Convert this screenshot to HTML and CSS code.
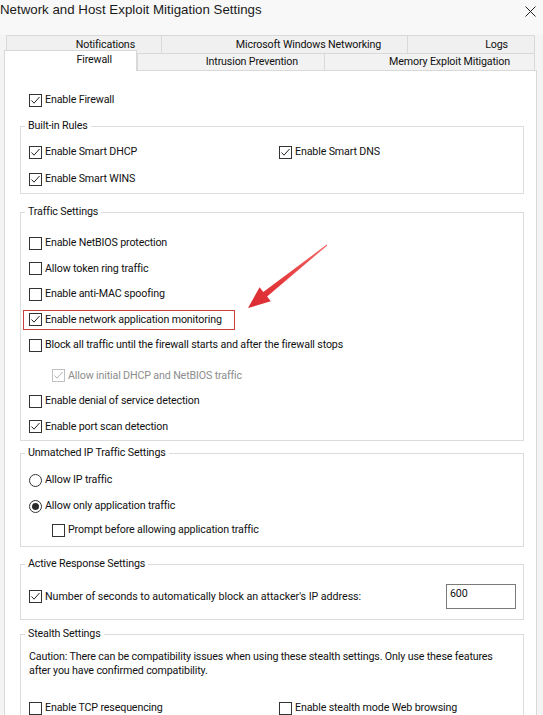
FILE: index.html
```html
<!DOCTYPE html>
<html>
<head>
<meta charset="utf-8">
<link rel="stylesheet" href="styles.css">
</head>
<body>
<div class="window">
  <div class="titlebar">
    <span class="title">Network and Host Exploit Mitigation Settings</span>
    <svg class="close" width="11" height="11" viewBox="0 0 11 11"><path d="M0.5 0.5L10.5 10.5M10.5 0.5L0.5 10.5" stroke="#222" stroke-width="1" fill="none"/></svg>
  </div>
  <div class="tabs">
    <div class="tabrow tabrow-top">
      <div class="tab w-notif">Notifications</div>
      <div class="tab w-mwn">Microsoft Windows Networking</div>
      <div class="tab w-logs">Logs</div>
    </div>
    <div class="tabrow tabrow-bottom">
      <div class="tab tab-active w-fw">Firewall</div>
      <div class="tab w-ips">Intrusion Prevention</div>
      <div class="tab w-mem">Memory Exploit Mitigation</div>
    </div>
  </div>
  <div class="panel">
    <div class="row"><span class="cb checked"></span><span class="lbl">Enable Firewall</span></div>

    <fieldset class="group g-builtin">
      <legend>Built-in Rules</legend>
      <div class="two-col">
        <div class="row"><span class="cb checked"></span><span class="lbl">Enable Smart DHCP</span></div>
        <div class="row"><span class="cb checked"></span><span class="lbl">Enable Smart DNS</span></div>
      </div>
      <div class="row mt9"><span class="cb checked"></span><span class="lbl">Enable Smart WINS</span></div>
    </fieldset>

    <fieldset class="group g-traffic">
      <legend>Traffic Settings</legend>
      <div class="stack">
        <div class="row"><span class="cb"></span><span class="lbl">Enable NetBIOS protection</span></div>
        <div class="row"><span class="cb"></span><span class="lbl">Allow token ring traffic</span></div>
        <div class="row"><span class="cb"></span><span class="lbl">Enable anti-MAC spoofing</span></div>
        <div class="row"><span class="highlight"><span class="cb checked"></span><span class="lbl">Enable network application monitoring</span></span></div>
        <div class="row"><span class="cb"></span><span class="lbl">Block all traffic until the firewall starts and after the firewall stops</span></div>
        <div class="row indent mt5 disabled"><span class="cb checked"></span><span class="lbl">Allow initial DHCP and NetBIOS traffic</span></div>
        <div class="row"><span class="cb"></span><span class="lbl">Enable denial of service detection</span></div>
        <div class="row"><span class="cb checked"></span><span class="lbl">Enable port scan detection</span></div>
      </div>
    </fieldset>

    <fieldset class="group g-unmatched">
      <legend>Unmatched IP Traffic Settings</legend>
      <div class="row"><span class="rb"></span><span class="lbl">Allow IP traffic</span></div>
      <div class="row mt8"><span class="rb selected"></span><span class="lbl">Allow only application traffic</span></div>
      <div class="row indent mt6"><span class="cb"></span><span class="lbl">Prompt before allowing application traffic</span></div>
    </fieldset>

    <fieldset class="group g-active">
      <legend>Active Response Settings</legend>
      <div class="row row-input">
        <span class="row"><span class="cb checked"></span><span class="lbl lbl-wide">Number of seconds to automatically block an attacker's IP address:</span></span>
        <span class="textbox">600</span>
      </div>
    </fieldset>

    <fieldset class="group g-stealth">
      <legend>Stealth Settings</legend>
      <p class="caution">Caution: There can be compatibility issues when using these stealth settings. Only use these features<br>after you have confirmed compatibility.</p>
      <div class="two-col mt22">
        <div class="row"><span class="cb"></span><span class="lbl">Enable TCP resequencing</span></div>
        <div class="row"><span class="cb"></span><span class="lbl">Enable stealth mode Web browsing</span></div>
      </div>
    </fieldset>
  </div>
</div>
<svg class="arrow" width="543" height="715" viewBox="0 0 543 715">
  <defs>
    <linearGradient id="ag" x1="327" y1="245" x2="248" y2="308" gradientUnits="userSpaceOnUse">
      <stop offset="0" stop-color="#f06a6a"/>
      <stop offset="0.6" stop-color="#e53a3d"/>
      <stop offset="1" stop-color="#d92a30"/>
    </linearGradient>
  </defs>
  <polygon points="248,308 270.8,301.3 267.1,296.6 327.3,245.4 326.7,244.6 263.3,292 259.6,287.3" fill="url(#ag)"/>
</svg>
</body>
</html>
```
FILE: styles.css
```css
html, body {
  margin: 0;
  padding: 0;
}
body {
  width: 543px;
  height: 715px;
  overflow: hidden;
  background: #f4f4f4;
  position: relative;
  font-family: Roboto, "Liberation Sans", Arial, sans-serif;
  font-size: 10.7px;
  letter-spacing: -0.15px;
  color: #111111;
}
.window {
  width: 543px;
}
.titlebar {
  height: 35px;
  display: flex;
  justify-content: space-between;
  align-items: flex-start;
  padding-right: 7px;
  background: #f8f8f8;
}
.title {
  font-family: "Liberation Sans", Arial, sans-serif;
  font-size: 13.3px;
  letter-spacing: 0;
  line-height: 20px;
  color: #1a1a1a;
}
.close {
  margin-top: 6px;
}
.tabrow {
  display: flex;
}
.tabrow-top {
  height: 18px;
  padding-left: 6px;
}
.tabrow-bottom {
  height: 17px;
  padding-left: 4px;
  align-items: flex-end;
}
.tab {
  box-sizing: border-box;
  border: 1px solid #d9d9d9;
  border-right: none;
  border-bottom: none;
  background: #f0f0f0;
  display: flex;
  align-items: center;
  justify-content: flex-end;
  padding-right: 26px;
  line-height: 16px;
  color: #111111;
}
.tabrow-top .tab { height: 18px; }
.tabrow-bottom .tab { height: 17px; }
.tab:last-child { border-right: 1px solid #d9d9d9; }
.w-notif { width: 155px; }
.w-mwn { width: 246px; }
.w-logs { width: 128px; }
.w-fw { width: 133px; padding-right: 24px; }
.w-ips { width: 187px; }
.w-mem { width: 211px; padding-right: 24px; }
.tabrow-bottom .tab:not(.tab-active) {
  background: #f2f2f2;
}
.tabrow-bottom .tab-active {
  height: 21px;
  margin-bottom: -1px;
  background: #ffffff;
  position: relative;
  z-index: 1;
  border-right: 1px solid #d9d9d9;
  padding-bottom: 2px;
}
.panel {
  box-sizing: border-box;
  width: 533px;
  height: 700px;
  margin-left: 4px;
  background: #ffffff;
  border: 1px solid #d9d9d9;
  padding: 20px 12px 0 15px;
}
.row {
  display: flex;
  align-items: center;
  height: 18px;
  padding-left: 9px;
  white-space: nowrap;
}
.group .row { padding-left: 0; }
.group .row.indent { padding-left: 23px; }
.row .row { padding-left: 0; }
.cb {
  box-sizing: border-box;
  width: 13px;
  height: 13px;
  border: 1px solid #333333;
  background: #ffffff;
  flex: none;
  margin-right: 3px;
}
.cb.checked {
  background: #ffffff url("data:image/svg+xml;utf8,<svg xmlns='http://www.w3.org/2000/svg' width='11' height='11' viewBox='0 0 11 11'><path d='M1.5 5.5 L4 8.2 L9.5 2' fill='none' stroke='%23222' stroke-width='1'/></svg>") no-repeat center;
}
.disabled .cb {
  border-color: #c0c0c0;
}
.disabled .cb.checked {
  background: #ffffff url("data:image/svg+xml;utf8,<svg xmlns='http://www.w3.org/2000/svg' width='11' height='11' viewBox='0 0 11 11'><path d='M1.5 5.5 L4 8.2 L9.5 2' fill='none' stroke='%23b4b4b4' stroke-width='1'/></svg>") no-repeat center;
}
.disabled .lbl { color: #8d8d8d; }
.rb {
  box-sizing: border-box;
  width: 13px;
  height: 13px;
  border: 1px solid #333333;
  border-radius: 50%;
  background: #ffffff;
  flex: none;
  margin-right: 3px;
  display: flex;
  align-items: center;
  justify-content: center;
}
.rb.selected::after {
  content: "";
  width: 7px;
  height: 7px;
  border-radius: 50%;
  background: #2a2a2a;
}
.lbl {
  line-height: 18px;
}
.lbl-wide {
  letter-spacing: -0.05px;
}
.group {
  box-sizing: border-box;
  width: 504px;
  margin: 0;
  border: 1px solid #dcdcdc;
  padding: 0 7px 0 8px;
  min-width: 0;
}
.group legend {
  margin-left: -4px;
  padding: 0 3px;
  line-height: 14px;
  color: #111111;
}
.two-col {
  display: grid;
  grid-template-columns: 250px 1fr;
}
.mt5 { margin-top: 5px; }
.mt6 { margin-top: 6px; }
.mt8 { margin-top: 8px; }
.mt9 { margin-top: 9px; }
.mt22 { margin-top: 22px; }
.g-builtin { margin-top: 10px; padding-top: 10px; padding-bottom: 5px; }
.g-traffic { margin-top: 11px; padding-top: 15px; padding-bottom: 4.5px; }
.g-unmatched { margin-top: 5px; padding-top: 11px; padding-bottom: 7px; }
.g-active { margin-top: 10px; padding-top: 13px; padding-bottom: 10px; }
.g-stealth { margin-top: 7px; padding-top: 9px; padding-bottom: 20px; }
.stack {
  display: flex;
  flex-direction: column;
  gap: 7.5px;
}
.highlight {
  display: flex;
  align-items: center;
  height: 18px;
  border: 1px solid #c9403f;
  margin: -1px 0 -1px -6px;
  padding: 0 12px 0 5px;
}
.row-input {
  height: 25px;
  justify-content: space-between;
}
.textbox {
  box-sizing: border-box;
  width: 70px;
  height: 25px;
  border: 1px solid #7a7a7a;
  padding: 1px 0 0 3px;
  line-height: 16px;
  align-self: flex-start;
}
.caution {
  margin: 0;
  line-height: 13.5px;
  white-space: nowrap;
}
.arrow {
  position: absolute;
  left: 0;
  top: 0;
  pointer-events: none;
}
```
